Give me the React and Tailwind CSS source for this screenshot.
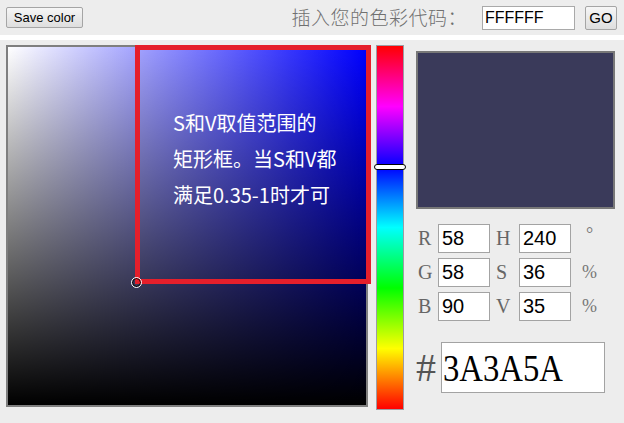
import { useState } from "react";

const rows = [
  { a: "R", av: "58", b: "H", bv: "240", unit: "°" },
  { a: "G", av: "58", b: "S", bv: "36", unit: "%" },
  { a: "B", av: "90", b: "V", bv: "35", unit: "%" },
];

const serif = "font-['Liberation_Serif','Noto_Sans_CJK_SC',serif]";
const arial = "font-['Liberation_Sans',Arial,sans-serif]";

function Field({ value }) {
  return (
    <div
      className={`flex h-[29px] w-[52px] items-center border border-[#a3a3a3] bg-white pl-[3px] text-[20px] text-black ${arial}`}
    >
      {value}
    </div>
  );
}

export default function App() {
  const [hex] = useState("3A3A5A");

  return (
    <div className="h-[423px] w-[624px] overflow-hidden bg-white">
      {/* top bar */}
      <div className="flex h-[35px] items-center bg-[#ededed] pl-[6px] pr-[7px]">
        <button
          type="button"
          className={`h-[21px] w-[77px] rounded-[2px] border border-[#a5a5a5] bg-[linear-gradient(to_bottom,#f6f6f6,#dedede)] text-[13px] leading-none text-black ${arial}`}
        >
          Save color
        </button>
        <span className="ml-auto text-[19px] tracking-[0.5px] text-[#707070] font-['Noto_Sans_CJK_SC',sans-serif] font-light">
          插入您的色彩代码：
        </span>
        <div
          className={`ml-[15px] flex h-[24px] w-[93px] items-center border border-[#a9a9a9] bg-white pl-[2px] text-[16px] text-black ${arial}`}
        >
          FFFFFF
        </div>
        <button
          type="button"
          className={`ml-[10px] h-[24px] w-[32px] rounded-[2px] border border-[#a5a5a5] bg-[linear-gradient(to_bottom,#f6f6f6,#dedede)] text-[15px] text-black ${arial}`}
        >
          GO
        </button>
      </div>

      {/* picker */}
      <div className="relative mt-[5px] flex h-[383px] bg-[#ededed] pl-[6px] pt-[5px]">
        {/* saturation / value square */}
        <div className="h-[362px] w-[362px] border-2 border-[#7f7f7f] bg-[linear-gradient(to_right,#ffffff,#0000ff)]">
          <div className="h-full w-full bg-[linear-gradient(to_top,#000000,rgba(0,0,0,0))]" />
        </div>

        {/* hue bar */}
        <div className="relative ml-[8px] h-[365px] w-[28px] border border-[#9c9ca4] bg-[linear-gradient(to_bottom,#ff0000,#ff00ff,#0000ff,#00ffff,#00ff00,#ffff00,#ff0000)]">
          <div className="absolute left-[-3px] top-[118px] h-[6px] w-[32px] rounded-full border-[1.5px] border-black bg-white" />
        </div>

        {/* right column */}
        <div className="ml-[12px] flex flex-col">
          <div className="mt-[6px] h-[158px] w-[199px] border-2 border-[#787878] bg-[#3a3a5a]" />

          <div className="mt-[14px] flex flex-col gap-[4px]">
            {rows.map((r) => (
              <div key={r.a} className="flex items-center">
                <span className={`w-[22px] pl-[2px] text-[20px] text-[#666] ${serif}`}>{r.a}</span>
                <Field value={r.av} />
                <span className={`ml-[6px] w-[23px] text-[20px] text-[#666] ${serif}`}>{r.b}</span>
                <Field value={r.bv} />
                <span
                  className={`ml-[11px] text-[18px] text-[#777] ${serif} ${r.unit === "°" ? "-mt-[8px] ml-[15px] text-[14px]" : ""}`}
                >
                  {r.unit}
                </span>
              </div>
            ))}
          </div>

          <div className="mt-[21px] flex items-center">
            <span className={`w-[25px] text-[40px] leading-none text-[#555] ${serif}`}>#</span>
            <div
              className={`flex h-[51px] w-[164px] items-center border border-[#a3a3a3] bg-white pl-[1px] text-black ${serif}`}
            >
              <span className="origin-left scale-x-[0.86] text-[38px] leading-none">{hex}</span>
            </div>
          </div>
        </div>

        {/* annotation box */}
        <div className="absolute left-[135px] top-[5px] h-[239px] w-[236px] border-[5px] border-[#e51f2b] pl-[33px] pt-[55px] text-[20px] leading-[36px] text-white font-['Noto_Sans_CJK_SC',sans-serif]">
          <div>S和V取值范围的</div>
          <div>矩形框。当S和V都</div>
          <div>满足0.35-1时才可</div>
        </div>

        {/* SV marker */}
        <div className="absolute left-[132px] top-[238px] h-[9px] w-[9px] rounded-full border border-black outline outline-1 outline-white" />
      </div>
    </div>
  );
}
